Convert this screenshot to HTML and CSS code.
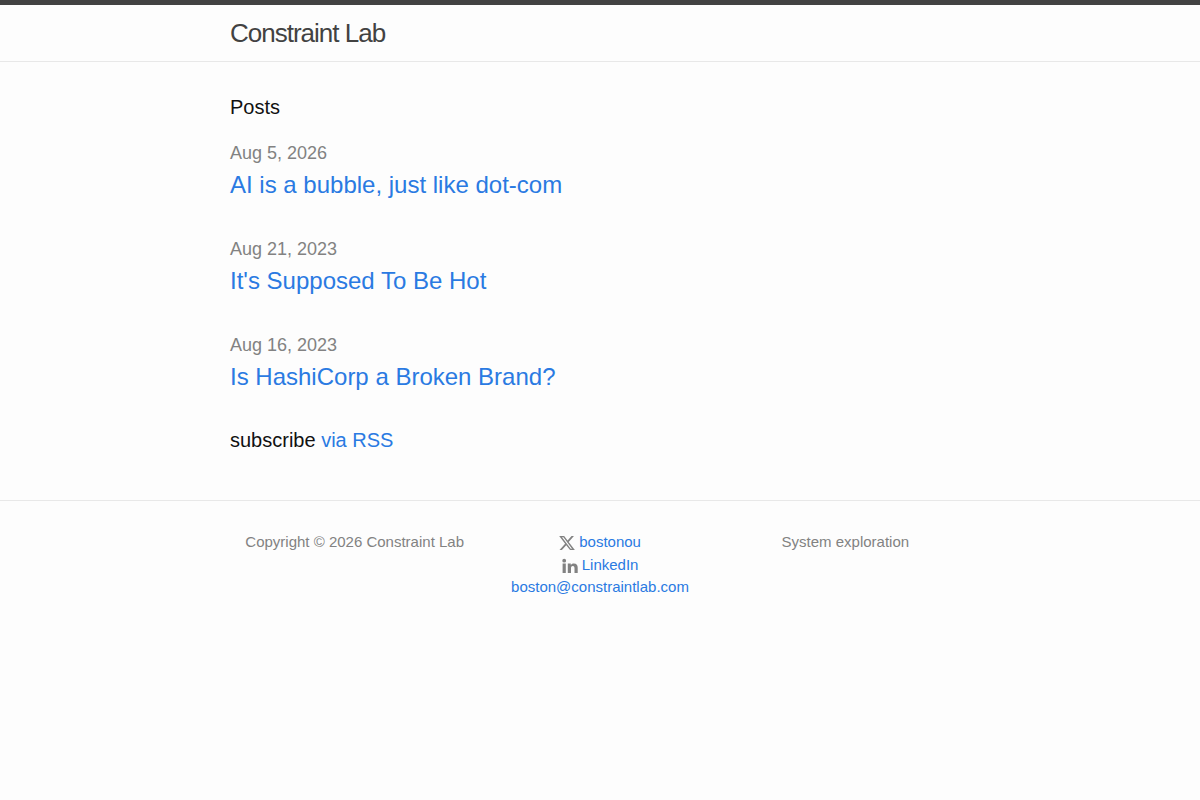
FILE: index.html
```html
<!DOCTYPE html>
<html lang="en">
<head>
    <meta charset="UTF-8">
    <meta name="viewport" content="width=device-width, initial-scale=1.0">
    <title>Constraint Lab</title>
    <link rel="stylesheet" href="styles.css">
</head>
<body>
    <header class="site-header">
        <div class="wrapper">
            <a class="site-title" href="/">Constraint Lab</a>
        </div>
    </header>

    <main class="page-content">
        <div class="wrapper">
            <h2 class="post-list-heading">Posts</h2>
            <ul class="post-list">
                <li>
                    <span class="post-meta">Aug 5, 2026</span>
                    <h3><a class="post-link" href="#">AI is a bubble, just like dot-com</a></h3>
                </li>
                <li>
                    <span class="post-meta">Aug 21, 2023</span>
                    <h3><a class="post-link" href="#">It's Supposed To Be Hot</a></h3>
                </li>
                <li>
                    <span class="post-meta">Aug 16, 2023</span>
                    <h3><a class="post-link" href="#">Is HashiCorp a Broken Brand?</a></h3>
                </li>
            </ul>
            <p class="rss-subscribe">subscribe <a href="/feed.xml">via RSS</a></p>
        </div>
    </main>

    <footer class="site-footer">
        <div class="wrapper footer-cols">
            <p class="footer-col">Copyright © 2026 Constraint Lab</p>
            <ul class="footer-col contact-list">
                <li>
                    <svg class="icon" viewBox="1 1 22 22" aria-hidden="true"><path d="M18.244 2.25h3.308l-7.227 8.26 8.502 11.24H16.17l-5.214-6.817L4.99 21.75H1.68l7.73-8.835L1.254 2.25H8.08l4.713 6.231zm-1.161 17.52h1.833L7.084 4.126H5.117z"/></svg>
                    <a href="#">bostonou</a>
                </li>
                <li>
                    <svg class="icon" viewBox="0 0 16 16" aria-hidden="true"><path d="M.6 5.600h3.200V15H.6zM2.200.8a1.900 1.900 0 1 1 0 3.800 1.900 1.900 0 0 1 0-3.800zM5.800 5.600h3v1.300C9.300 6 10.400 5.400 11.800 5.400c2.900 0 3.900 1.800 3.900 4.400V15h-3.200v-4.600c0-1.200-.2-2.300-1.700-2.300S9 9.200 9 10.400V15H5.800z"/></svg>
                    <a href="#">LinkedIn</a>
                </li>
                <li><a href="mailto:boston@constraintlab.com">boston@constraintlab.com</a></li>
            </ul>
            <p class="footer-col">System exploration</p>
        </div>
    </footer>
</body>
</html>
```

FILE: styles.css
```css
* {
    box-sizing: border-box;
}
body, h2, h3, p, ul {
    margin: 0;
    padding: 0;
}
body {
    font-family: "Liberation Sans", Arial, sans-serif;
    font-size: 20px;
    line-height: 30px;
    color: #111;
    background-color: #fdfdfd;
}
ul {
    list-style: none;
}
a {
    color: #2a7ae2;
    text-decoration: none;
}
a:hover {
    text-decoration: underline;
}
.wrapper {
    max-width: 800px;
    margin: 0 auto;
    padding: 0 30px;
}

/* Header */
.site-header {
    border-top: 5px solid #424242;
    border-bottom: 1px solid #e8e8e8;
}
.site-title {
    display: inline-block;
    font-size: 26px;
    line-height: 56px;
    letter-spacing: -1px;
    color: #424242;
}

/* Posts */
.page-content {
    padding: 30px 0;
}
.post-list-heading {
    margin-bottom: 15px;
    font-size: 20px;
    font-weight: 400;
}
.post-list li {
    margin-bottom: 30px;
}
.post-meta {
    font-size: 18px;
    line-height: 22px;
    color: #828282;
}
.post-list h3 {
    font-weight: 400;
    line-height: 36px;
}
.post-link {
    font-size: 24px;
}
.rss-subscribe {
    margin-bottom: 15px;
}

/* Footer */
.site-footer {
    padding: 30px 0;
    border-top: 1px solid #e8e8e8;
    font-size: 15px;
    line-height: 22px;
    color: #828282;
}
.footer-cols {
    display: flex;
    padding: 0 32px;
}
.footer-col {
    flex: 1;
    text-align: center;
}
.contact-list li:first-child {
    margin-bottom: 1px;
}
.icon {
    width: 16px;
    height: 16px;
    fill: #828282;
    vertical-align: -4px;
}
```
